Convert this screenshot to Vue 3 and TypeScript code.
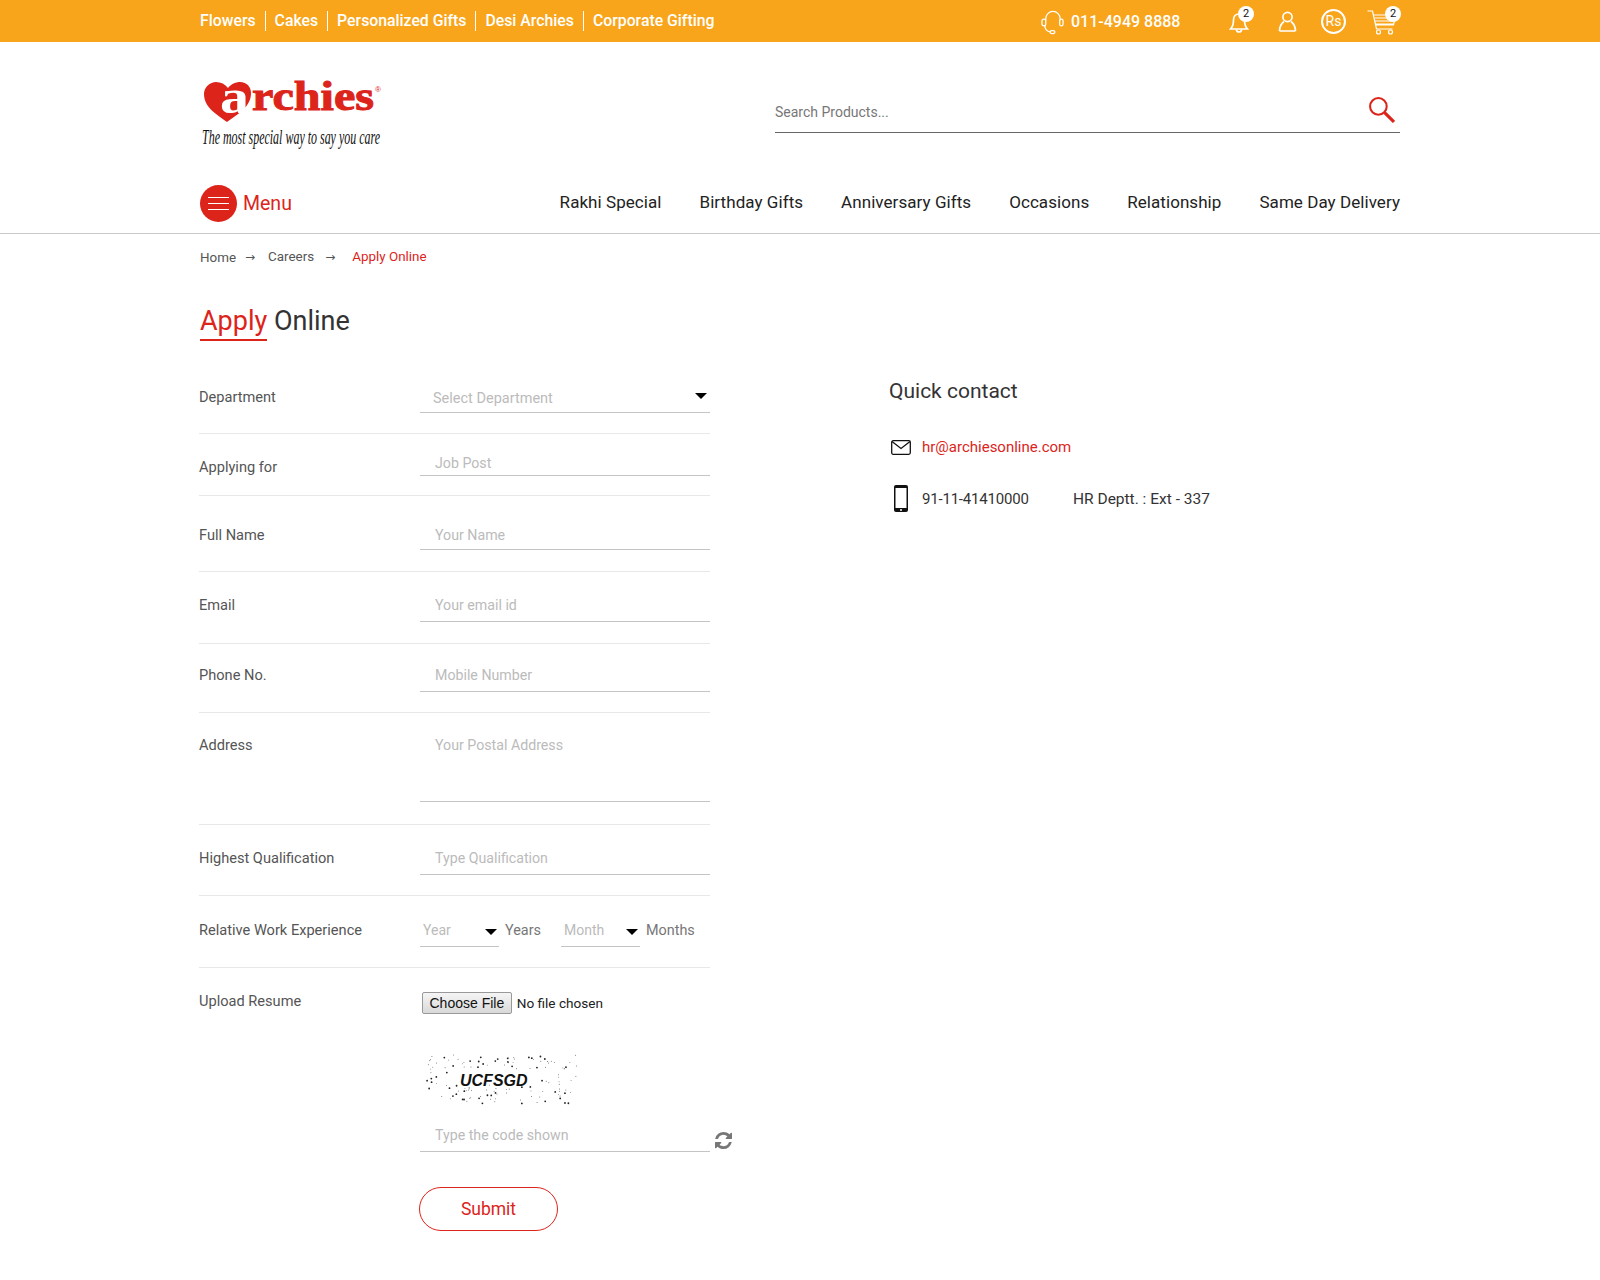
<script setup lang="ts">
const topLinks = ['Flowers', 'Cakes', 'Personalized Gifts', 'Desi Archies', 'Corporate Gifting']
const navLinks = ['Rakhi Special', 'Birthday Gifts', 'Anniversary Gifts', 'Occasions', 'Relationship', 'Same Day Delivery']

// captcha speckle, fixed seed so it never moves between renders
let seed = 37
function rnd(max: number) {
  seed = (seed * 9301 + 49297) % 233280
  return (seed / 233280) * max
}
const speckles = Array.from({ length: 130 }, () => {
  const x = rnd(152) + 2
  let y = rnd(50) + 2
  if (x > 30 && x < 110 && y > 16 && y < 32) y = y > 24 ? y + 12 : y - 12
  return { x, y, r: rnd(1) > 0.7 ? 0.9 : 0.45 }
})
</script>

<template>
  <div class="page">
    <div class="topbar">
      <div class="wrap topbar-inner">
        <ul class="top-links">
          <li v-for="l in topLinks" :key="l">{{ l }}</li>
        </ul>
        <div class="top-right">
          <svg class="ic-head" viewBox="0 0 24 26" fill="none" stroke="#fff" stroke-width="1.3">
            <path d="M5 11V9a7.5 7.5 0 0 1 15 0v2" />
            <rect x="1" y="9.500" width="4" height="7" rx="2" />
            <rect x="19.500" y="9.500" width="3.500" height="7" rx="1.700" />
            <path d="M4 16.500c0 4 3 6 6 6.500" />
            <rect x="9.500" y="21.500" width="5" height="3" rx="1.500" />
          </svg>
          <span class="phone">011-4949 8888</span>
          <div class="ic-wrap bell">
            <svg viewBox="0 0 20 25" fill="none" stroke="#fff" stroke-width="1.700">
              <path d="M1.500 20c2-2 3-4 3-9 0-3.500 2.200-6 5.500-6s5.500 2.500 5.500 6c0 5 1 7 3 9z" />
              <path d="M7.500 20.500a2.500 2.500 0 0 0 5 0" />
            </svg>
            <span class="badge">2</span>
          </div>
          <svg class="ic-user" viewBox="0 0 18 21" fill="none" stroke="#fff" stroke-width="1.700">
            <circle cx="9" cy="6" r="4.600" />
            <path d="M1 20c0-4 2-7.500 4.500-9.500M17 20c0-4-2-7.500-4.500-9.500M1 20h16" />
          </svg>
          <div class="rs">Rs</div>
          <div class="ic-wrap cart">
            <svg viewBox="0 0 32 26" fill="none" stroke="#fff" stroke-width="1.200">
              <path d="M1 2h5l4 18h16" />
              <path d="M7 6h22l-2 10H9.500M8 9h20M8.500 12h19M9 15h18" />
              <circle cx="12" cy="23" r="2" />
              <circle cx="24" cy="23" r="2" />
            </svg>
            <span class="badge">2</span>
          </div>
        </div>
      </div>
    </div>

    <div class="wrap mid">
      <svg class="logo" viewBox="0 0 186 76" width="186" height="76">
        <path
          d="M27 42C16 34 4 27 4 14 4 7 10 2 16 2c5 0 9 2 12 6 3-4 8-6 12-6 7 0 11 5 11 11 0 14-13 21-24 29z"
          fill="#dc241b"
        />
        <text x="20" y="33" class="logo-a" textLength="29" lengthAdjust="spacingAndGlyphs">a</text>
        <text x="52" y="30" class="logo-word" textLength="122" lengthAdjust="spacingAndGlyphs">rchies</text>
        <text x="175" y="12" class="logo-reg">®</text>
        <text x="2" y="64" class="logo-tag" textLength="178" lengthAdjust="spacingAndGlyphs">
          The most special way to say you care
        </text>
      </svg>
      <div class="search">
        <input type="text" placeholder="Search Products..." />
        <svg viewBox="0 0 26 26" fill="none" stroke="#dc241b">
          <circle cx="10" cy="10" r="8" stroke-width="2" />
          <path d="M16 16l9 9" stroke-width="3" />
        </svg>
      </div>
    </div>

    <div class="navrow">
      <div class="wrap nav-inner">
        <div class="menu">
          <span class="burger"><i></i><i></i><i></i></span>
          <span>Menu</span>
        </div>
        <nav class="nav">
          <a v-for="n in navLinks" :key="n">{{ n }}</a>
        </nav>
      </div>
    </div>

    <div class="wrap">
      <div class="crumbs">
        <span>Home</span><span class="arrow">→</span>
        <span class="up careers">Careers</span><span class="arrow">→</span>
        <span class="current up">Apply Online</span>
      </div>
      <h1 class="title"><span>Apply</span> Online</h1>

      <div class="content">
        <form class="form" @submit.prevent>
          <div class="row row-dept">
            <label>Department</label>
            <div class="sel">
              <select><option>Select Department</option></select>
              <b class="caret"></b>
            </div>
          </div>
          <div class="row row-post">
            <label>Applying for</label>
            <input type="text" placeholder="Job Post" />
          </div>
          <div class="row row-name">
            <label>Full Name</label>
            <input type="text" placeholder="Your Name" />
          </div>
          <div class="row row-email">
            <label>Email</label>
            <input type="text" placeholder="Your email id" />
          </div>
          <div class="row row-phone">
            <label>Phone No.</label>
            <input type="text" placeholder="Mobile Number" />
          </div>
          <div class="row row-addr">
            <label>Address</label>
            <textarea placeholder="Your Postal Address"></textarea>
          </div>
          <div class="row row-qual">
            <label>Highest Qualification</label>
            <input type="text" placeholder="Type Qualification" />
          </div>
          <div class="row row-exp">
            <label>Relative Work Experience</label>
            <div class="exp">
              <div class="sel small">
                <select><option>Year</option></select>
                <b class="caret"></b>
              </div>
              <span class="unit unit-years">Years</span>
              <div class="sel small">
                <select><option>Month</option></select>
                <b class="caret"></b>
              </div>
              <span class="unit">Months</span>
            </div>
          </div>

          <div class="row row-upload">
            <label>Upload Resume</label>
            <input class="file" type="file" />
          </div>

          <div class="extra">
            <svg class="captcha" viewBox="0 0 156 55" width="156" height="55">
              <circle v-for="(s, i) in speckles" :key="i" :cx="s.x" :cy="s.y" :r="s.r" fill="#222" />
              <text x="36" y="33" class="captcha-text">UCFSGD</text>
            </svg>
            <div class="code">
              <input type="text" placeholder="Type the code shown" />
              <svg class="refresh" viewBox="0 0 1536 1536" fill="#777">
                <path
                  d="M1511 928q0 5-1 7-64 268-268 434.500t-478 166.500q-146 0-282.500-55t-243.500-157l-129 129q-19 19-45 19t-45-19-19-45v-448q0-26 19-45t45-19h448q26 0 45 19t19 45-19 45l-137 137q71 66 161 102t187 36q134 0 250-65t186-179q11-17 53-117 8-23 30-23h192q13 0 22.500 9.500t9.500 22.500zm25-800v448q0 26-19 45t-45 19h-448q-26 0-45-19t-19-45 19-45l138-138q-148-137-349-137-134 0-250 65t-186 179q-11 17-53 117-8 23-30 23h-199q-13 0-22.500-9.500t-9.500-22.500v-7q65-268 270-434.500t480-166.500q146 0 284 55.500t245 156.500l130-129q19-19 45-19t45 19 19 45z"
                />
              </svg>
            </div>
            <button class="submit" type="submit">Submit</button>
          </div>
        </form>

        <aside class="quick">
          <h2>Quick contact</h2>
          <div class="q-row q-mail">
            <svg viewBox="0 0 20 15" width="20" height="15" fill="none" stroke="#111" stroke-width="1.300">
              <rect x=".7" y=".7" width="18.600" height="13.600" rx="1.500" />
              <path d="M1 1.500l9 7 9-7" />
            </svg>
            <a>hr@archiesonline.com</a>
          </div>
          <div class="q-row q-phone">
            <svg viewBox="0 0 14 27" width="14" height="27">
              <rect x="0" y="0" width="14" height="27" rx="2" fill="#111" />
              <rect x="1.500" y="3" width="11" height="20" fill="#fff" />
              <circle cx="7" cy="25" r="1" fill="#fff" />
            </svg>
            <span class="num">91-11-41410000</span>
            <span class="ext">HR Deptt. : Ext - 337</span>
          </div>
        </aside>
      </div>
    </div>
  </div>
</template>

<style>
html,
body {
  margin: 0;
  background: #fff;
}
</style>

<style scoped>
.page {
  font-family: Roboto, 'Open Sans', sans-serif;
  color: #333;
  min-height: 1280px;
}
.wrap {
  width: 1200px;
  margin: 0 auto;
}
.topbar {
  background: #f8a51b;
  height: 42px;
}
.topbar-inner {
  height: 42px;
  display: flex;
  justify-content: space-between;
  align-items: center;
}
.top-links {
  display: flex;
  list-style: none;
  margin: 0;
  padding: 0;
}
.top-links li {
  color: #fff;
  font-size: 15.800px;
  font-weight: 500;
  line-height: 20px;
  padding: 0 9px;
  border-left: 1px solid #fff;
}
.top-links li:first-child {
  padding-left: 0;
  border-left: 0;
}
.top-right {
  display: flex;
  align-items: center;
  color: #fff;
  padding-right: 1px;
}
.ic-head {
  width: 23px;
  height: 25px;
  margin-top: 3px;
}
.phone {
  font-size: 16px;
  font-weight: 500;
  margin-left: 7px;
  width: 158px;
}
.ic-wrap {
  position: relative;
}
.ic-wrap svg {
  display: block;
}
.bell svg {
  width: 20px;
  height: 25px;
}
.bell {
  margin-top: 1px;
}
.ic-user {
  width: 19px;
  height: 21px;
  margin-left: 29px;
  margin-top: 1px;
}
.rs {
  width: 25px;
  height: 25px;
  box-sizing: border-box;
  border: 2px solid #fff;
  border-radius: 50%;
  margin-left: 24px;
  font-size: 14px;
  line-height: 21px;
  text-align: center;
}
.cart {
  margin-left: 20px;
  margin-top: 1px;
}
.cart svg {
  width: 33px;
  height: 26px;
}
.badge {
  position: absolute;
  top: -3px;
  right: -5px;
  width: 16px;
  height: 16px;
  border-radius: 50%;
  background: #fff;
  color: #111;
  font-size: 11px;
  line-height: 16px;
  text-align: center;
}
.cart .badge {
  right: -2px;
}
.mid {
  height: 133px;
  display: flex;
  justify-content: space-between;
}
.logo {
  margin-top: 38px;
  overflow: visible;
}
.search {
  width: 625px;
  height: 91px;
  box-sizing: border-box;
  border-bottom: 1px solid #666;
  display: flex;
  align-items: flex-end;
  justify-content: space-between;
}
.search input {
  border: 0;
  outline: 0;
  padding: 0;
  height: 41px;
  width: 400px;
  font: 14px Roboto, sans-serif;
  color: #777;
}
.search input::placeholder {
  color: #777;
}
.search svg {
  width: 27px;
  height: 27px;
  margin: 0 5px 9px 0;
}
.navrow {
  border-bottom: 1px solid #c9c9c9;
  height: 58px;
}
.nav-inner {
  display: flex;
  justify-content: space-between;
  align-items: flex-start;
}
.menu {
  display: flex;
  align-items: center;
  gap: 6px;
  color: #dc241b;
  font-size: 19.500px;
  margin-top: 10px;
}
.burger {
  width: 37px;
  height: 37px;
  border-radius: 50%;
  background: #dc241b;
  display: flex;
  flex-direction: column;
  justify-content: center;
  align-items: center;
  gap: 5px;
}
.burger i {
  width: 21px;
  height: 1px;
  background: #fff;
}
.nav {
  display: flex;
  gap: 38px;
  padding-top: 17px;
}
.nav a {
  font-size: 17px;
  line-height: 20px;
  letter-spacing: 0.06px;
  color: #222;
}
.crumbs {
  display: flex;
  align-items: center;
  padding-top: 13px;
  height: 20px;
  font-size: 13.400px;
  color: #555;
}
.crumbs .arrow {
  font-family: 'DejaVu Sans', sans-serif;
  font-size: 12px;
  margin: 0 13px 0 9px;
}
.crumbs .up {
  margin-top: -2px;
}
.crumbs .careers {
  margin-right: 2px;
}
.crumbs .current {
  color: #dc241b;
  margin-left: 4px;
}
.title {
  margin: 35px 0 0;
  font-size: 27px;
  font-weight: 400;
  line-height: 38px;
  height: 42px;
  color: #333;
}
.title span {
  color: #dc241b;
  display: inline-block;
  height: 37px;
  border-bottom: 2px solid #dc241b;
}
.content {
  display: flex;
  margin-top: 31px;
}
.form {
  width: 511px;
  margin-left: -1px;
}
.row {
  display: grid;
  grid-template-columns: 221px 290px;
  align-items: start;
  border-bottom: 1px solid #e8e8e8;
  padding-bottom: 20px;
}
.row label {
  font-size: 14.600px;
  line-height: 20px;
  color: #555;
}
.form input[type='text'],
.form textarea,
.form select {
  display: block;
  width: 100%;
  box-sizing: border-box;
  border: 0;
  border-bottom: 1px solid #c4c4c4;
  outline: 0;
  background: transparent;
  padding: 0 0 0 15px;
  margin: 0;
  font: 14.200px Roboto, sans-serif;
  color: #bbb;
  border-radius: 0;
}
input::placeholder,
textarea::placeholder {
  color: #bbb;
}
.form select {
  appearance: none;
  -webkit-appearance: none;
  padding-left: 13px;
  height: 29px;
  font-size: 14.500px;
}
.sel {
  position: relative;
}
.caret {
  position: absolute;
  right: 3px;
  top: 9px;
  border-left: 6.500px solid transparent;
  border-right: 6.500px solid transparent;
  border-top: 6px solid #000;
}
.row-dept {
  padding-top: 9px;
}
.row-dept label {
  margin-top: 3px;
}
.row-post {
  padding-bottom: 18px;
}
.row-post label {
  margin-top: 23px;
}
.form .row-post input {
  margin-top: 17px;
  height: 25px;
}
.row-name label {
  margin-top: 19px;
}
.form .row-name input {
  margin-top: 15px;
  height: 29px;
}
.row-name {
  padding-top: 10px;
  padding-bottom: 21px;
}
.row-email label {
  margin-top: 23px;
}
.form .row-email input {
  margin-top: 17px;
  height: 33px;
}
.row-email {
  padding-bottom: 21px;
}
.row-phone label {
  margin-top: 21px;
}
.form .row-phone input {
  margin-top: 15px;
  height: 33px;
}
.row-addr label {
  margin-top: 22px;
}
.form .row-addr textarea {
  margin-top: 22px;
  height: 67px;
  resize: none;
  line-height: 20px;
}
.row-addr {
  padding-bottom: 22px;
}
.row-qual label {
  margin-top: 23px;
}
.form .row-qual input {
  margin-top: 17px;
  height: 33px;
}
.row-exp {
  padding-bottom: 19px;
}
.row-exp label {
  margin-top: 24px;
}
.exp {
  display: flex;
  align-items: flex-start;
  margin-top: 18px;
}
.sel.small {
  width: 79px;
}
.form .sel.small select {
  height: 33px;
  padding-left: 3px;
  font-size: 14px;
}
.sel.small .caret {
  top: 15px;
  right: 2px;
  border-left-width: 6px;
  border-right-width: 6px;
}
.unit {
  color: #777;
  font-size: 14.400px;
  line-height: 34px;
  margin-left: 6px;
}
.unit-years {
  width: 56px;
}
.row-upload {
  border-bottom: 0;
  padding-bottom: 0;
  height: 84px;
}
.row-upload label {
  margin-top: 23px;
}
.file {
  margin: 24px 0 0 2px;
  font: 13.600px Roboto, sans-serif;
  color: #222;
  width: 220px;
}
.file::file-selector-button {
  font: 14px 'Liberation Sans', sans-serif;
  color: #111;
  height: 22px;
  padding: 0 6.500px;
  margin-right: 5px;
  border: 1px solid #999;
  border-radius: 2px;
  background: linear-gradient(#f5f5f5, #d9d9d9);
}
.extra {
  padding-left: 221px;
}
.captcha {
  display: block;
  margin: 1px 0 0 4px;
}
.captcha-text {
  font: italic 700 16px 'Liberation Sans', sans-serif;
  fill: #111;
}
.code {
  position: relative;
  margin-top: 13px;
}
.form .code input {
  height: 31px;
  padding-bottom: 2px;
}
.refresh {
  position: absolute;
  left: 295px;
  top: 11px;
  width: 17px;
  height: 17px;
}
.submit {
  display: block;
  width: 139px;
  height: 44px;
  margin: 35px 0 0 -1px;
  background: #fff;
  border: 1px solid #dc241b;
  border-radius: 22px;
  color: #dc241b;
  font: 17.500px Roboto, sans-serif;
}
.quick {
  margin-left: 179px;
  color: #333;
}
.quick h2 {
  font-size: 21px;
  font-weight: 400;
  line-height: 28px;
  margin: 2px 0 0;
}
.q-row {
  display: flex;
  align-items: center;
}
.q-mail {
  margin: 32px 0 0 2px;
  height: 20px;
  gap: 11px;
  font-size: 15px;
}
.q-mail a {
  color: #dc241b;
}
.q-phone {
  margin: 28px 0 0 5px;
  font-size: 15.500px;
}
.q-phone .num {
  font-size: 15px;
  letter-spacing: -0.2px;
  margin-left: 14px;
  width: 151px;
}
.logo-a {
  font: 700 48px 'Liberation Serif', serif;
  fill: #fff;
}
.logo-word {
  font: 700 42px 'Liberation Serif', serif;
  fill: #dc241b;
  stroke: #dc241b;
  stroke-width: 1px;
}
.logo-reg {
  font: 8px 'Liberation Sans', sans-serif;
  fill: #dc241b;
}
.logo-tag {
  font: italic 21px 'Liberation Serif', serif;
  fill: #111;
}
</style>
